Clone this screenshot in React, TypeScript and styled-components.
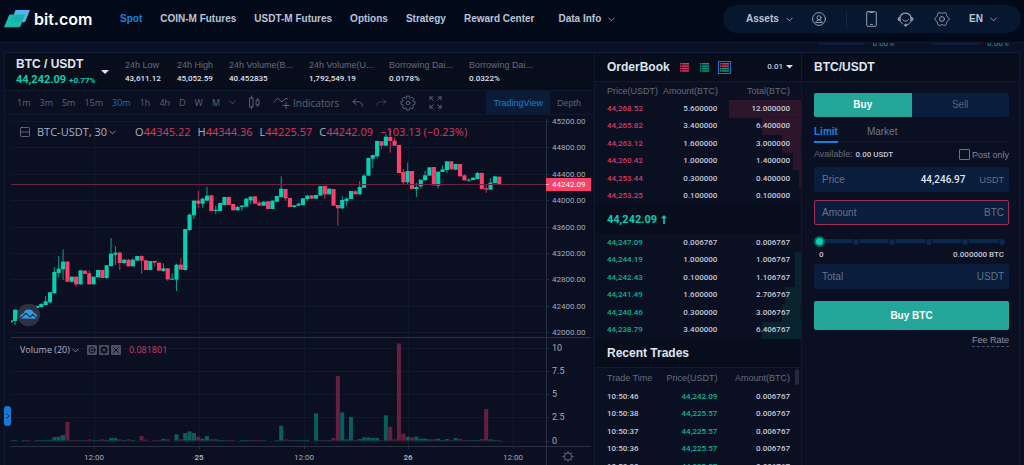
import React from "react";
import styled, { createGlobalStyle, css } from "styled-components";

const c = {
  header: "#020a19",
  page: "#0b1124",
  panel: "#0a1021",
  title: "#080d1c",
  line: "#101a31",
  edge: "#0f1f3f",
  field: "#0a1d3c",
  text: "#c3cad8",
  bright: "#dfe5f0",
  muted: "#636c7f",
  blue: "#1683e0",
  green: "#04d0b1",
  greenText: "#08b498",
  teal: "#24a69a",
  red: "#fc3f6b",
  redText: "#dc3861",
};

const ui = `"Liberation Sans", Arial, sans-serif`;
const num = `Roboto, "Liberation Sans", sans-serif`;
const tv = `"Open Sans", "Noto Sans", sans-serif`;

const Global = createGlobalStyle`
  * { box-sizing: border-box; }
  body { margin: 0; background: ${c.page}; color: ${c.text}; font: 9px/12px ${ui}; }
  button, input { font: inherit; color: inherit; border: 0; padding: 0; margin: 0; background: none; }
  button { cursor: pointer; }
  a { color: inherit; text-decoration: none; }
  svg { display: block; flex: none; }
  h1, h2 { margin: 0; }
`;

const Page = styled.div`
  display: flex;
  flex-direction: column;
  height: 100vh;
  overflow: hidden;
`;

/* ---------- header ---------- */

const Header = styled.header`
  display: flex;
  align-items: center;
  justify-content: space-between;
  flex: none;
  height: 42px;
  padding: 0 3px 4px 4px;
  background: ${c.header};
`;

const Brand = styled.a`
  display: flex;
  align-items: center;
  gap: 4px;
  width: 116px;
  color: #fff;
  font: 600 16px/20px Inter, ${ui};
`;

const Nav = styled.nav`
  display: flex;
  flex: 1;
  gap: 18px;
`;

const NavLink = styled.a<{ $on?: boolean; $apart?: boolean }>`
  display: flex;
  align-items: center;
  gap: 7px;
  padding-left: ${(p) => (p.$apart ? 6 : 0)}px;
  font-size: 10px;
  font-weight: 700;
  white-space: nowrap;
  color: ${(p) => (p.$on ? c.blue : "#b9c4d8")};
`;

const Pill = styled.div`
  display: flex;
  align-items: center;
  width: 298px;
  height: 28px;
  padding: 0 24px 0 23px;
  justify-content: space-between;
  border-radius: 14px;
  background: #051830;
  color: #93a0b5;
`;

const PillButton = styled.button`
  display: flex;
  align-items: center;
  gap: 7px;
  font-size: 10px;
  font-weight: 700;
  color: #b9c4d8;
`;

const IconButton = styled.button`
  display: flex;
  align-items: center;
  color: inherit;
`;

const Divider = styled.span`
  width: 1px;
  height: 17px;
  background: #14294a;
`;

const Strip = styled.div`
  display: flex;
  justify-content: flex-end;
  align-items: flex-end;
  gap: 39px;
  flex: none;
  height: 10px;
  padding: 0 15px 2px 0;
  border-top: 1px solid ${c.line};
  overflow: hidden;
`;

const StripItem = styled.span`
  display: flex;
  align-items: flex-start;
  gap: 7px;
  height: 12px;
  font: 500 8px/12px ${num};
  color: #0a8d7e;
  &::before {
    content: "";
    width: 47px;
    height: 7px;
    background: #0a1c3c;
  }
`;

/* ---------- frame ---------- */

const Workspace = styled.main`
  position: relative;
  display: grid;
  grid-template-columns: minmax(0, 590fr) minmax(0, 207fr) minmax(0, 219fr);
  flex: 1;
  min-height: 0;
  margin: 0 4px;
  border-top: 1px solid ${c.edge};
`;

const Column = styled.section`
  display: flex;
  flex-direction: column;
  min-height: 0;
  background: ${c.panel};
  border-left: 1px solid ${c.line};
  overflow: hidden;
  &:last-of-type { border-right: 1px solid ${c.line}; }
`;

const Heading = styled.header`
  display: flex;
  align-items: center;
  gap: 8px;
  flex: none;
  height: 29px;
  padding: 0 8px 0 12px;
  background: ${c.title};
  border-bottom: 1px solid ${c.line};
`;

const Title = styled.h2`
  font: 700 12px/16px ${ui};
  color: ${c.bright};
  white-space: nowrap;
`;

/* ---------- ticker ---------- */

const Ticker = styled.header`
  display: flex;
  align-items: center;
  flex: none;
  height: 38px;
  padding: 0 11px;
  background: ${c.title};
  border-bottom: 1px solid ${c.line};
  white-space: nowrap;
`;

const PairButton = styled.button`
  display: flex;
  align-items: center;
  justify-content: space-between;
  width: 93px;
  margin-right: 16px;
  text-align: left;
`;

const PairPrice = styled.div`
  display: flex;
  align-items: baseline;
  gap: 3px;
  font: 700 11px/15px ${num};
  color: ${c.green};
  small { font-size: 8px; }
`;

const Stats = styled.dl`
  display: flex;
  gap: 12px;
  margin: 0;
`;

const Stat = styled.div<{ $wide?: boolean }>`
  width: ${(p) => (p.$wide ? 68 : 40)}px;
  dt { color: ${c.muted}; line-height: 14px; }
  dd { margin: 0; font: 500 8px/13px ${num}; color: ${c.bright}; }
`;

/* ---------- chart toolbar ---------- */

const Toolbar = styled.div`
  display: flex;
  align-items: center;
  flex: none;
  height: 24px;
  padding: 0 6px 0 12px;
  border-bottom: 1px solid ${c.line};
  color: #5b6475;
  white-space: nowrap;
`;

const Intervals = styled.div`
  display: flex;
  align-items: center;
  gap: 9px;
`;

const Interval = styled.button<{ $on?: boolean }>`
  font: 9px/12px ${tv};
  color: ${(p) => (p.$on ? "#1370bd" : "inherit")};
`;

const Tools = styled.div`
  display: flex;
  align-items: center;
  flex: 1;
  gap: 13px;
  margin-left: 13px;
`;

const Indicators = styled.button`
  display: flex;
  align-items: center;
  gap: 3px;
  font: 10px/12px ${tv};
  color: inherit;
`;

const ViewTab = styled.button<{ $on?: boolean }>`
  height: 23px;
  padding: 0 7px;
  font-size: 9px;
  ${(p) =>
    p.$on &&
    css`
      background: #0a1c38;
      color: #1580d8;
    `}
`;

/* ---------- chart ---------- */

const ChartArea = styled.div`
  position: relative;
  flex: 1;
  min-height: 0;
  overflow: hidden;
  > svg { width: 100%; height: auto; }
`;

const Legend = styled.div<{ $top: number; $small?: boolean }>`
  position: absolute;
  top: ${(p) => p.$top}px;
  left: 15px;
  display: flex;
  align-items: center;
  gap: ${(p) => (p.$small ? 8 : 7)}px;
  font: ${(p) => (p.$small ? 9 : 11)}px/14px ${tv};
  color: #aab2c0;
  white-space: nowrap;
  b { font-weight: 400; color: ${c.redText}; }
`;

const LegendName = styled.button`
  display: flex;
  align-items: center;
  gap: 2px;
`;

const LegendValues = styled.div`
  display: flex;
  gap: 7px;
  margin-left: 12px;
`;

const LegendTools = styled.div`
  display: flex;
  gap: 2px;
`;

const LegendTool = styled.button`
  display: flex;
  align-items: center;
  justify-content: center;
  width: 10px;
  height: 10px;
  border-radius: 1px;
  background: #4b505e;
  color: ${c.panel};
`;

const Drawer = styled.button`
  position: absolute;
  left: 0;
  top: 353px;
  display: flex;
  align-items: center;
  justify-content: center;
  width: 7px;
  height: 20px;
  border-radius: 3px;
  background: #1478d4;
  color: #06244a;
`;

/* ---------- order book ---------- */

const Modes = styled.div`
  display: flex;
  align-items: center;
  flex: 1;
  gap: 7px;
`;

const Mode = styled.button<{ $on?: boolean }>`
  display: flex;
  align-items: center;
  justify-content: center;
  width: 13px;
  height: 13px;
  border: 1px solid ${(p) => (p.$on ? "#1473cc" : "transparent")};
`;

const Precision = styled.button`
  display: flex;
  align-items: center;
  gap: 3px;
  font: 500 8px/12px ${num};
`;

const Table = styled.table`
  display: block;
  thead, tbody { display: flex; flex-direction: column; }
  tbody { height: 105px; }
`;

const Row = styled.tr<{ $depth?: number; $tint?: string }>`
  display: grid;
  grid-template-columns: 50fr 61fr 73fr;
  align-items: center;
  flex: 1;
  padding: 0 11px 0 12px;
  background: linear-gradient(${(p) => p.$tint ?? "transparent"}, ${(p) => p.$tint ?? "transparent"}) right / ${(p) => p.$depth ?? 0}% 100% no-repeat;
`;

const HeadRow = styled(Row)<{ $height: number }>`
  flex: none;
  height: ${(p) => p.$height}px;
  color: ${c.muted};
`;

const Th = styled.th<{ $left?: boolean }>`
  padding: 0;
  font-weight: 400;
  white-space: nowrap;
  text-align: ${(p) => (p.$left ? "left" : "right")};
`;

const Td = styled.td<{ $left?: boolean; $color?: string }>`
  padding: 0;
  font: 500 8px/12px ${num};
  text-align: ${(p) => (p.$left ? "left" : "right")};
  color: ${(p) => p.$color ?? c.text};
`;

const LastPrice = styled.div`
  display: flex;
  align-items: center;
  gap: 4px;
  flex: none;
  height: 29px;
  padding: 0 12px;
  background: ${c.title};
  font: 700 11px/14px ${num};
  color: ${c.green};
`;

const Trades = styled.div`
  position: relative;
  min-height: 0;
  overflow: hidden;
  &::after {
    content: "";
    position: absolute;
    right: 2px;
    top: 1px;
    width: 4px;
    height: 16px;
    border-radius: 2px;
    background: #252b3b;
  }
`;

/* ---------- order form ---------- */

const Form = styled.form`
  display: flex;
  flex-direction: column;
  padding: 11px 10px 0 12px;
`;

const Sides = styled.div`
  display: grid;
  grid-template-columns: 1fr 1fr;
  height: 24px;
  border-radius: 2px;
  overflow: hidden;
  background: ${c.field};
`;

const Side = styled.button<{ $on?: boolean }>`
  font-size: 10px;
  font-weight: ${(p) => (p.$on ? 700 : 400)};
  color: ${(p) => (p.$on ? "#fff" : "#56627a")};
  background: ${(p) => (p.$on ? c.teal : "none")};
`;

const Kinds = styled.div`
  display: flex;
  gap: 29px;
  height: 25px;
  border-bottom: 1px solid ${c.line};
`;

const Kind = styled.button<{ $on?: boolean }>`
  height: 26px;
  padding-top: 6px;
  font-size: 10px;
  font-weight: ${(p) => (p.$on ? 700 : 400)};
  color: ${(p) => (p.$on ? c.blue : "#6d778a")};
  border-bottom: 2px solid ${(p) => (p.$on ? c.blue : "transparent")};
`;

const Line = styled.div`
  display: flex;
  align-items: center;
  justify-content: space-between;
  height: 25px;
  color: ${c.muted};
  b { font: 500 8px/12px ${num}; color: ${c.text}; }
`;

const Check = styled.label`
  display: flex;
  align-items: center;
  gap: 2px;
  color: #7b8496;
  input {
    appearance: none;
    width: 11px;
    height: 11px;
    border: 1px solid #6a7385;
    border-radius: 1px;
  }
`;

const Field = styled.label<{ $error?: boolean }>`
  display: flex;
  align-items: center;
  gap: 14px;
  height: 25px;
  padding: 0 4px 0 7px;
  border: 1px solid ${(p) => (p.$error ? "#a32c52" : c.field)};
  border-radius: 2px;
  background: ${c.field};
  font-size: 10px;
  color: #667289;
  input {
    flex: 1;
    min-width: 0;
    width: 0;
    text-align: right;
    font: 500 10px/14px ${num};
    color: ${c.bright};
    outline: 0;
  }
  small { font-size: 9px; }
`;

const Gap = styled.div`
  height: 8px;
`;

const SliderBox = styled.div`
  position: relative;
  display: flex;
  align-items: center;
  height: 12px;
  margin: 10px 6px 0 6px;
  input {
    position: absolute;
    z-index: 2;
    left: -6px;
    width: calc(100% + 6px);
    height: 12px;
    appearance: none;
  }
  input::-webkit-slider-thumb {
    appearance: none;
    width: 11px;
    height: 11px;
    border-radius: 50%;
    border: 2px solid #05675f;
    background: ${c.green};
  }
`;

const Segment = styled.span`
  position: relative;
  flex: 1;
  height: 4px;
  background: #0a2a50;
  &::after {
    content: "";
    position: absolute;
    right: -3px;
    top: -1px;
    width: 6px;
    height: 6px;
    border: 1px solid ${c.panel};
    border-radius: 50%;
    background: #0a2a50;
    z-index: 1;
  }
`;

const SliderLabels = styled.div`
  display: flex;
  justify-content: space-between;
  padding: 2px 5px 3px 5px;
  font: 500 8px/12px ${num};
`;

const Submit = styled.button`
  height: 29px;
  margin-top: 12px;
  border-radius: 2px;
  background: ${c.teal};
  font-size: 10px;
  font-weight: 700;
  color: #fff;
`;

const FeeLink = styled.a`
  align-self: flex-end;
  margin-top: 5px;
  line-height: 11px;
  color: #8b93a3;
  border-bottom: 1px dashed #4b5365;
`;

/* ---------- icons ---------- */

const Icon = ({ w, h = w, vb, children, sw = 1 }: { w: number; h?: number; vb?: string; sw?: number; children: React.ReactNode }) => (
  <svg width={w} height={h} viewBox={vb ?? `0 0 ${w} ${h}`} fill="none" stroke="currentColor" strokeWidth={sw} strokeLinecap="round" strokeLinejoin="round" aria-hidden="true">
    {children}
  </svg>
);

const Chevron = () => (
  <Icon w={7} h={5}><path d="M.7 1 3.5 3.8 6.3 1" opacity=".75" /></Icon>
);

const Caret = ({ w = 8 }: { w?: number }) => (
  <svg width={w} height={w / 2} viewBox="0 0 8 4" aria-hidden="true"><path d="M0 0h8L4 4z" fill={c.bright} /></svg>
);

// closed outline whose radius swells `lobes` times round the centre
const lobedRing = (center: number, radius: number, swell: number, lobes: number) =>
  Array.from({ length: 72 }, (_, i) => {
    const a = (i * Math.PI) / 36;
    const r = radius + swell * Math.cos(lobes * a);
    return `${(center + r * Math.cos(a)).toFixed(2)},${(center + r * Math.sin(a)).toFixed(2)}`;
  }).join(" ");

const Cog = ({ size }: { size: number }) => {
  const pts: string[] = [];
  for (let i = 0; i < 8; i++) {
    const a = (i * Math.PI) / 4;
    [[-0.27, 5.5], [-0.2, 7.1], [0.2, 7.1], [0.27, 5.5]].forEach(([d, r]) =>
      pts.push(`${(8 + r * Math.sin(a + d)).toFixed(2)},${(8 - r * Math.cos(a + d)).toFixed(2)}`)
    );
  }
  return (
    <Icon w={size} vb="0 0 16 16">
      <polygon points={pts.join(" ")} />
      <circle cx="8" cy="8" r="1.8" />
    </Icon>
  );
};

const BookIcon = ({ top, bottom }: { top: string; bottom: string }) => (
  <svg width="9" height="9" viewBox="0 0 9 9" aria-hidden="true">
    {[0, 1, 2, 3].map((i) => (
      <g key={i} fill={i < 2 ? top : bottom}>
        <rect x="0" y={i * 2.4} width="1.4" height="1.5" />
        <rect x="2.1" y={i * 2.4} width="6.9" height="1.5" />
      </g>
    ))}
  </svg>
);

/* ---------- chart data ---------- */

// [high, open/close top, open/close bottom, low, rising, volume], oldest first, in thirds of a pixel
type Candle = [number, number, number, number, 0 | 1, number];
const FIRST = -43;
const candles: Candle[] = [
  [614, 616, 622, 622, 1, 2], [584, 584, 618, 630, 1, 2], [584, 586, 600, 602, 1, 0], [588, 590, 600, 602, 1, 2],
  [588, 590, 600, 600, 0, 2], [584, 586, 598, 600, 1, 0], [572, 573, 579, 580, 1, 2], [564, 567, 576, 576, 1, 2],
  [543, 559, 570, 570, 1, 2], [531, 532, 562, 566, 1, 2], [456, 471, 535, 538, 1, 11], [423, 461, 474, 487, 1, 12],
  [403, 440, 463, 495, 1, 17], [438, 440, 500, 500, 0, 56], [484, 485, 500, 503, 1, 2], [485, 485, 508, 515, 0, 2],
  [466, 466, 508, 508, 1, 2], [466, 467, 477, 477, 0, 2], [466, 475, 508, 508, 0, 4], [485, 485, 508, 508, 1, 2],
  [465, 465, 487, 487, 1, 2], [465, 465, 489, 489, 0, 4], [450, 451, 489, 492, 1, 2], [369, 416, 453, 455, 1, 8],
  [394, 413, 419, 450, 1, 8], [410, 413, 444, 465, 0, 4], [432, 434, 444, 446, 1, 2], [432, 434, 454, 454, 0, 4],
  [430, 434, 454, 454, 1, 2], [423, 423, 437, 437, 1, 0], [421, 423, 437, 476, 0, 14], [436, 436, 465, 465, 0, 3],
  [438, 438, 465, 465, 1, 0], [438, 438, 443, 455, 0, 2], [442, 443, 467, 467, 0, 2], [445, 460, 468, 470, 1, 6],
  [459, 460, 493, 498, 0, 4], [475, 491, 494, 494, 1, 0], [446, 449, 494, 528, 1, 19], [430, 449, 464, 464, 0, 4],
  [342, 342, 465, 467, 1, 23], [295, 299, 345, 348, 1, 28], [256, 257, 301, 312, 1, 23], [227, 257, 266, 280, 0, 12],
  [248, 251, 266, 280, 1, 6], [215, 242, 257, 257, 1, 14], [241, 241, 288, 288, 0, 4], [272, 284, 288, 297, 1, 4],
  [263, 264, 288, 288, 1, 2], [246, 246, 270, 270, 1, 2], [245, 246, 270, 270, 0, 2], [267, 267, 286, 286, 0, 2],
  [272, 276, 286, 286, 1, 0], [270, 272, 276, 287, 1, 2], [248, 251, 275, 275, 1, 2], [244, 245, 256, 268, 1, 2],
  [244, 244, 266, 266, 0, 2], [258, 263, 272, 272, 0, 2], [259, 260, 272, 272, 1, 2], [259, 259, 282, 282, 0, 0],
  [256, 257, 282, 282, 1, 0], [243, 243, 260, 260, 1, 2], [184, 221, 246, 246, 1, 45], [222, 222, 250, 257, 0, 4],
  [249, 249, 276, 276, 0, 2], [270, 271, 276, 277, 1, 2], [264, 266, 272, 273, 1, 2], [249, 250, 270, 270, 1, 2],
  [241, 242, 252, 257, 1, 2], [240, 241, 251, 251, 0, 0], [239, 240, 251, 251, 1, 82], [213, 213, 242, 242, 1, 2],
  [213, 213, 238, 252, 0, 2], [220, 221, 238, 238, 1, 2], [222, 222, 272, 272, 0, 8], [270, 270, 280, 332, 0, 194],
  [243, 255, 280, 283, 1, 85], [248, 251, 258, 272, 1, 4], [228, 228, 252, 252, 1, 71], [225, 229, 238, 238, 0, 2],
  [198, 216, 238, 238, 1, 5], [177, 182, 218, 218, 1, 10], [128, 129, 182, 182, 1, 10], [119, 120, 131, 159, 1, 8],
  [77, 78, 124, 130, 1, 8], [79, 79, 92, 101, 0, 2], [57, 65, 92, 92, 1, 76], [44, 66, 78, 113, 0, 42],
  [67, 77, 92, 92, 0, 4], [90, 90, 174, 174, 0, 292], [163, 171, 202, 208, 0, 21], [143, 168, 202, 208, 1, 12],
  [168, 168, 222, 222, 0, 10], [204, 216, 222, 246, 1, 12], [194, 194, 214, 220, 1, 6], [168, 181, 196, 196, 1, 6],
  [157, 157, 182, 182, 1, 4], [156, 156, 211, 211, 0, 4], [170, 170, 212, 220, 1, 6], [152, 163, 171, 171, 1, 2],
  [139, 139, 165, 174, 1, 5], [139, 139, 163, 163, 0, 2], [147, 147, 164, 164, 1, 8], [147, 147, 184, 184, 0, 5],
  [178, 181, 196, 196, 0, 2], [190, 194, 197, 201, 1, 2], [186, 188, 195, 195, 1, 2], [171, 174, 192, 192, 1, 2],
  [173, 174, 222, 222, 0, 5], [211, 220, 224, 234, 0, 95], [190, 203, 224, 224, 1, 4], [184, 184, 204, 204, 1, 2],
  [185, 185, 209, 209, 0, 2],
];

const prices = ["45200.00", "44800.00", "44400.00", "44000.00", "43600.00", "43200.00", "42800.00", "42400.00", "42000.00"];
const volumes: [string, number][] = [["10", 233], ["7.5", 256], ["5", 279], ["2.5", 302], ["0", 326]];
const times: [string, number][] = [["12:00", 89], ["25", 194], ["12:00", 299], ["26", 403], ["12:00", 508]];
const priceY = (i: number) => Math.round(6 + i * 26.4);

const Chart = () => (
  <svg viewBox="0 0 589 350" role="img" aria-label="BTC-USDT 30 minute candles and volume">
    <clipPath id="plot"><rect x="6" y="0" width="535" height="350" /></clipPath>
    <g stroke="#111a2c" strokeWidth="1" shapeRendering="crispEdges">
      {times.map(([, x]) => <path key={x} d={`M${x}.5 5V331`} />)}
      {prices.map((p, i) => <path key={p} d={`M6 ${priceY(i)}.5H541`} />)}
      {volumes.map(([v, y]) => <path key={v} d={`M6 ${y}.5H541`} />)}
    </g>
    <g clipPath="url(#plot)">
      {candles.map(([hi, top, bottom, lo, up, vol], i) => {
        const x = 193.3 + 4.362 * (i + FIRST);
        const fill = up ? c.green : c.red;
        return (
          <g key={i}>
            <rect x={x - 2} y={325.7 - vol / 3} width="4" height={vol / 3} fill={up ? "#075e5c" : "#66203e"} />
            <rect x={x - 0.5} y={hi / 3} width="1" height={(lo - hi) / 3} fill={fill} opacity=".75" />
            <rect x={x - 2.05} y={top / 3} width="4.1" height={(bottom - top) / 3} fill={fill} />
          </g>
        );
      })}
    </g>
    <path d="M6 69.5H541" stroke="#6b2140" strokeWidth="1" />
    <g stroke="#2a3041" strokeWidth="1" shapeRendering="crispEdges">
      <path d="M541.5 4V350M6 222.5H586M6 331.5H586" />
      {prices.map((p, i) => <path key={p} d={`M541 ${priceY(i)}.5h3`} />)}
      {volumes.map(([v, y]) => <path key={v} d={`M541 ${y}.5h3`} />)}
      {times.map(([, x]) => <path key={x} d={`M${x}.5 331v3`} />)}
    </g>
    <g fill="#a3aab8" fontFamily="Roboto, sans-serif" fontSize="8">
      {prices.map((p, i) => <text key={p} x="547" y={priceY(i) + 3}>{p}</text>)}
      {volumes.map(([v, y]) => <text key={v} x="547" y={y + 3} fontSize="9">{v}</text>)}
      {times.map(([t, x]) => (
        <text key={x} x={x} y="345" textAnchor="middle" fontSize={t.length < 3 ? 8 : 8} fontWeight={t.length < 3 ? 700 : 400}>{t}</text>
      ))}
    </g>
    <rect x="541" y="63" width="45" height="13" fill={c.red} />
    <path d="M541 69.5h3" stroke="#ffc4d2" />
    <text x="547" y="72" fill="#fff" fontFamily="Roboto, sans-serif" fontSize="8">44242.09</text>
    <circle cx="23.7" cy="200" r="11.3" fill="#2d3241" />
    <path d="M16 203.6a3 3 0 0 1 .8-4.6l1.6-.6a5.6 5.6 0 0 1 10.5-.6 4 4 0 0 1 2.9 4.4 2.6 2.6 0 0 1-1.6 1.6z" fill="#2f9ce8" />
    <path d="m15.600 203.300 5.200-4.900 4.400 3.600 2.800-2.600 3.600 3.700" fill="none" stroke="#2d3241" strokeWidth="1.2" />
    <g stroke="#6a7284" fill="none" strokeWidth=".9">
      <circle cx="563" cy="341.5" r="3.6" />
      <path d="M563 336v2M563 345v2M557.500 341.500h2M566.500 341.500h2M559.100 337.600l1.400 1.400M565.500 344l1.400 1.400M559.100 345.400l1.400-1.400M565.500 339l1.400-1.400" />
    </g>
  </svg>
);

/* ---------- book data ---------- */

const asks: [string, string, string, number][] = [
  ["44,268.52", "5.600000", "12.000000", 35],
  ["44,265.82", "3.400000", "6.400000", 19],
  ["44,263.12", "1.600000", "3.000000", 9],
  ["44,260.42", "1.000000", "1.400000", 4],
  ["44,253.44", "0.300000", "0.400000", 1],
  ["44,253.25", "0.100000", "0.100000", 0],
];
const bids: [string, string, string, number][] = [
  ["44,247.09", "0.006767", "0.006767", 0],
  ["44,244.19", "1.000000", "1.006767", 3],
  ["44,242.43", "0.100000", "1.106767", 3],
  ["44,241.49", "1.600000", "2.706767", 8],
  ["44,240.46", "0.300000", "3.006767", 9],
  ["44,238.79", "3.400000", "6.406767", 19],
];
const trades = [
  ["10:50:46", "44,242.09"],
  ["10:50:38", "44,225.57"],
  ["10:50:37", "44,225.57"],
  ["10:50:36", "44,225.57"],
  ["10:50:30", "44,225.57"],
  ["10:50:28", "44,225.57"],
];

const BookRows = ({ rows, color, tint }: { rows: typeof asks; color: string; tint: string }) => (
  <tbody>
    {rows.map(([price, amount, total, depth]) => (
      <Row key={price} $depth={depth} $tint={tint}>
        <Td $left $color={color}>{price}</Td>
        <Td>{amount}</Td>
        <Td>{total}</Td>
      </Row>
    ))}
  </tbody>
);

const stats: [string, string, boolean][] = [
  ["24h Low", "43,611.12", false],
  ["24h High", "45,052.59", false],
  ["24h Volume(B...", "40.452835", true],
  ["24h Volume(U...", "1,792,549.19", true],
  ["Borrowing Dai...", "0.0178%", true],
  ["Borrowing Dai...", "0.0322%", true],
];

export default function App() {
  return (
    <Page>
      <Global />
      <Header>
        <Brand href="#">
          <svg width="26" height="18" viewBox="0 0 26 18" aria-hidden="true">
            <path d="M11.500 0H26l-4.500 11a2 2 0 0 1-1.800 1.200H7z" fill="#52b4ee" />
            <path d="M7 4.500h14l-4.400 11.400a2.200 2.200 0 0 1-2 1.300H0l4.800-11.400A2.200 2.200 0 0 1 7 4.500z" fill="#15bfa8" />
            <path d="M9.500 4.500H21l-3 7.700H7z" fill="#2a8fc0" opacity=".35" />
          </svg>
          bit.com
        </Brand>
        <Nav>
          <NavLink href="#" $on>Spot</NavLink>
          <NavLink href="#">COIN-M Futures</NavLink>
          <NavLink href="#">USDT-M Futures</NavLink>
          <NavLink href="#">Options</NavLink>
          <NavLink href="#">Strategy</NavLink>
          <NavLink href="#">Reward Center</NavLink>
          <NavLink href="#" $apart>Data Info <Chevron /></NavLink>
        </Nav>
        <Pill>
          <PillButton>Assets <Chevron /></PillButton>
          <IconButton aria-label="Account">
            <Icon w={14}>
              <circle cx="7" cy="7" r="6.4" />
              <circle cx="7" cy="5.7" r="2" />
              <path d="M3.800 10.200c.5-1.600 1.700-2.200 3.200-2.200s2.700.6 3.200 2.200z" />
            </Icon>
          </IconButton>
          <Divider />
          <IconButton aria-label="Mobile app">
            <Icon w={11} h={16}>
              <rect x=".7" y=".7" width="9.6" height="14.6" rx="1" />
              <path d="M4 1.500h3M4.500 13.400h2" />
            </Icon>
          </IconButton>
          <IconButton aria-label="Support">
            <Icon w={17} h={16}>
              <path d="M3 6.300a5.700 5.700 0 0 1 11 0" strokeWidth="1.2" />
              <path d="M2.800 6.300a1.800 1.800 0 0 0 0 3.600zM14.200 6.300a1.800 1.800 0 0 1 0 3.600z" fill="currentColor" />
              <path d="M3.300 10.200a5.600 5.600 0 0 0 2.200 2.700M14 10.200c-.8 2.200-2.300 3.500-4.600 4M5.700 8.800c1.400 1.800 4.200 1.800 5.600 0" />
              <circle cx="8.6" cy="14.200" r="1" fill="currentColor" />
            </Icon>
          </IconButton>
          <IconButton aria-label="Settings">
            <Icon w={16}>
              <polygon points={lobedRing(8, 6.4, 0.7, 6)} />
              <circle cx="8" cy="8" r="2.400" />
            </Icon>
          </IconButton>
          <PillButton>EN <Chevron /></PillButton>
        </Pill>
      </Header>
      <Strip>
        <StripItem>0.00%</StripItem>
        <StripItem>0.00%</StripItem>
      </Strip>

      <Workspace>
        <Column>
          <Ticker>
            <PairButton>
              <div>
                <Title as="h1">BTC / USDT</Title>
                <PairPrice>44,242.09<small>+0.77%</small></PairPrice>
              </div>
              <Caret />
            </PairButton>
            <Stats>
              {stats.map(([label, value, wide]) => (
                <Stat key={value} $wide={wide}><dt>{label}</dt><dd>{value}</dd></Stat>
              ))}
            </Stats>
          </Ticker>
          <Toolbar>
            <Intervals>
              {["1m", "3m", "5m", "15m", "30m", "1h", "4h", "D", "W", "M"].map((t) => (
                <Interval key={t} $on={t === "30m"}>{t}</Interval>
              ))}
              <IconButton aria-label="More intervals"><Chevron /></IconButton>
            </Intervals>
            <Tools>
              <IconButton aria-label="Chart type">
                <Icon w={11} h={15}><path d="M1 3h3v9H1zM2.500 1v2M2.500 12v2M7.500 5h2.500v5H7.500zM8.700 3.500V5M8.700 10v1.500" /></Icon>
              </IconButton>
              <Indicators>
                <Icon w={17} h={15}><path d="M1 7l3.500-3.800 4.500 3.800L13 3.200l1.500 1M13 7.500v6M10 10.500h6" /></Icon>
                Indicators
              </Indicators>
              <IconButton aria-label="Undo"><Icon w={11} h={10}><path d="M4 1 1 3.800l3 2.800M1 3.800h5.500c2.200 0 3.800 1.400 3.800 4.200" /></Icon></IconButton>
              <IconButton aria-label="Redo"><Icon w={11} h={10}><path opacity=".5" d="m7 1 3 2.800-3 2.800M10 3.800H4.500C2.300 3.800.7 5.200.7 8" /></Icon></IconButton>
              <IconButton aria-label="Chart settings"><Cog size={16} /></IconButton>
              <IconButton aria-label="Full screen">
                <Icon w={13}><path d="M1 3.800V1h2.800M1 1l3.200 3.200M9.200 1H12v2.800M12 1 8.800 4.200M1 9.200V12h2.800M1 12l3.200-3.200M12 9.200V12H9.200M12 12 8.800 8.800" /></Icon>
              </IconButton>
            </Tools>
            <ViewTab $on>TradingView</ViewTab>
            <ViewTab>Depth</ViewTab>
          </Toolbar>
          <ChartArea>
            <Chart />
            <Legend $top={10}>
              <Icon w={10}><rect x=".5" y=".5" width="9" height="9" rx="1" opacity=".5" /><path d="M1 5h8" opacity=".5" /></Icon>
              <LegendName>BTC-USDT, 30 <Chevron /></LegendName>
              <LegendValues>
                <span>O<b>44345.22</b></span>
                <span>H<b>44344.36</b></span>
                <span>L<b>44225.57</b></span>
                <span>C<b>44242.09</b></span>
                <b>−103.13 (−0.23%)</b>
              </LegendValues>
            </Legend>
            <Legend $top={228} $small>
              <LegendName>Volume (20) <Chevron /></LegendName>
              <LegendTools>
                <LegendTool aria-label="Hide"><Icon w={8}><circle cx="4" cy="4" r="3" /><circle cx="4" cy="4" r=".8" /></Icon></LegendTool>
                <LegendTool aria-label="Format"><Icon w={8} vb="0 0 16 16" sw={3}><circle cx="8" cy="8" r="4.5" /><path d="M8 1v2M8 13v2M1 8h2M13 8h2M3 3l1 1M12 12l1 1M3 13l1-1M12 4l1-1" /></Icon></LegendTool>
                <LegendTool aria-label="Remove"><Icon w={8}><path d="m1.500 1.500 5 5M6.500 1.500l-5 5" /></Icon></LegendTool>
              </LegendTools>
              <b>0.081801</b>
            </Legend>
          </ChartArea>
        </Column>

        <Column>
          <Heading>
            <Title>OrderBook</Title>
            <Modes>
              <Mode aria-label="Asks only"><BookIcon top="#d63a60" bottom="#d63a60" /></Mode>
              <Mode aria-label="Bids only"><BookIcon top="#0a9c86" bottom="#0a9c86" /></Mode>
              <Mode aria-label="Asks and bids" $on><BookIcon top="#d63a60" bottom="#0a9c86" /></Mode>
            </Modes>
            <Precision>0.01 <Caret w={7} /></Precision>
          </Heading>
          <Table>
            <thead>
              <HeadRow $height={18}><Th $left>Price(USDT)</Th><Th>Amount(BTC)</Th><Th>Total(BTC)</Th></HeadRow>
            </thead>
            <BookRows rows={asks} color={c.redText} tint="#2d152b" />
          </Table>
          <LastPrice>
            44,242.09
            <svg width="6" height="9" viewBox="0 0 6 9" aria-hidden="true"><path d="M3 0l3 3.200H3.800V9H2.200V3.200H0z" fill={c.green} /></svg>
          </LastPrice>
          <Table><BookRows rows={bids} color={c.greenText} tint="#09242e" /></Table>
          <Heading><Title>Recent Trades</Title></Heading>
          <Trades>
            <Table>
              <thead>
                <HeadRow $height={20}><Th $left>Trade Time</Th><Th>Price(USDT)</Th><Th>Amount(BTC)</Th></HeadRow>
              </thead>
              <tbody>
                {trades.map(([time, price]) => (
                  <Row key={time}><Td $left>{time}</Td><Td $color={c.greenText}>{price}</Td><Td>0.006767</Td></Row>
                ))}
              </tbody>
            </Table>
          </Trades>
        </Column>

        <Column>
          <Heading><Title>BTC/USDT</Title></Heading>
          <Form onSubmit={(e) => e.preventDefault()}>
            <Sides>
              <Side type="button" $on>Buy</Side>
              <Side type="button">Sell</Side>
            </Sides>
            <Kinds>
              <Kind type="button" $on>Limit</Kind>
              <Kind type="button">Market</Kind>
            </Kinds>
            <Line>
              <span>Available: <b>0.00 USDT</b></span>
              <Check><input type="checkbox" />Post only</Check>
            </Line>
            <Field>Price<input defaultValue="44,246.97" /><small>USDT</small></Field>
            <Gap />
            <Field $error>Amount<input />BTC</Field>
            <SliderBox>
              {[1, 2, 3, 4, 5].map((n) => <Segment key={n} />)}
              <input type="range" min={0} max={100} defaultValue={0} aria-label="Share of balance" />
            </SliderBox>
            <SliderLabels><span>0</span><span>0.000000 BTC</span></SliderLabels>
            <Field>Total<input />USDT</Field>
            <Submit>Buy BTC</Submit>
            <FeeLink href="#">Fee Rate</FeeLink>
          </Form>
        </Column>
        <Drawer aria-label="Open markets"><Icon w={4} h={6}><path d="m1 1 2 2-2 2" /></Icon></Drawer>
      </Workspace>
    </Page>
  );
}
